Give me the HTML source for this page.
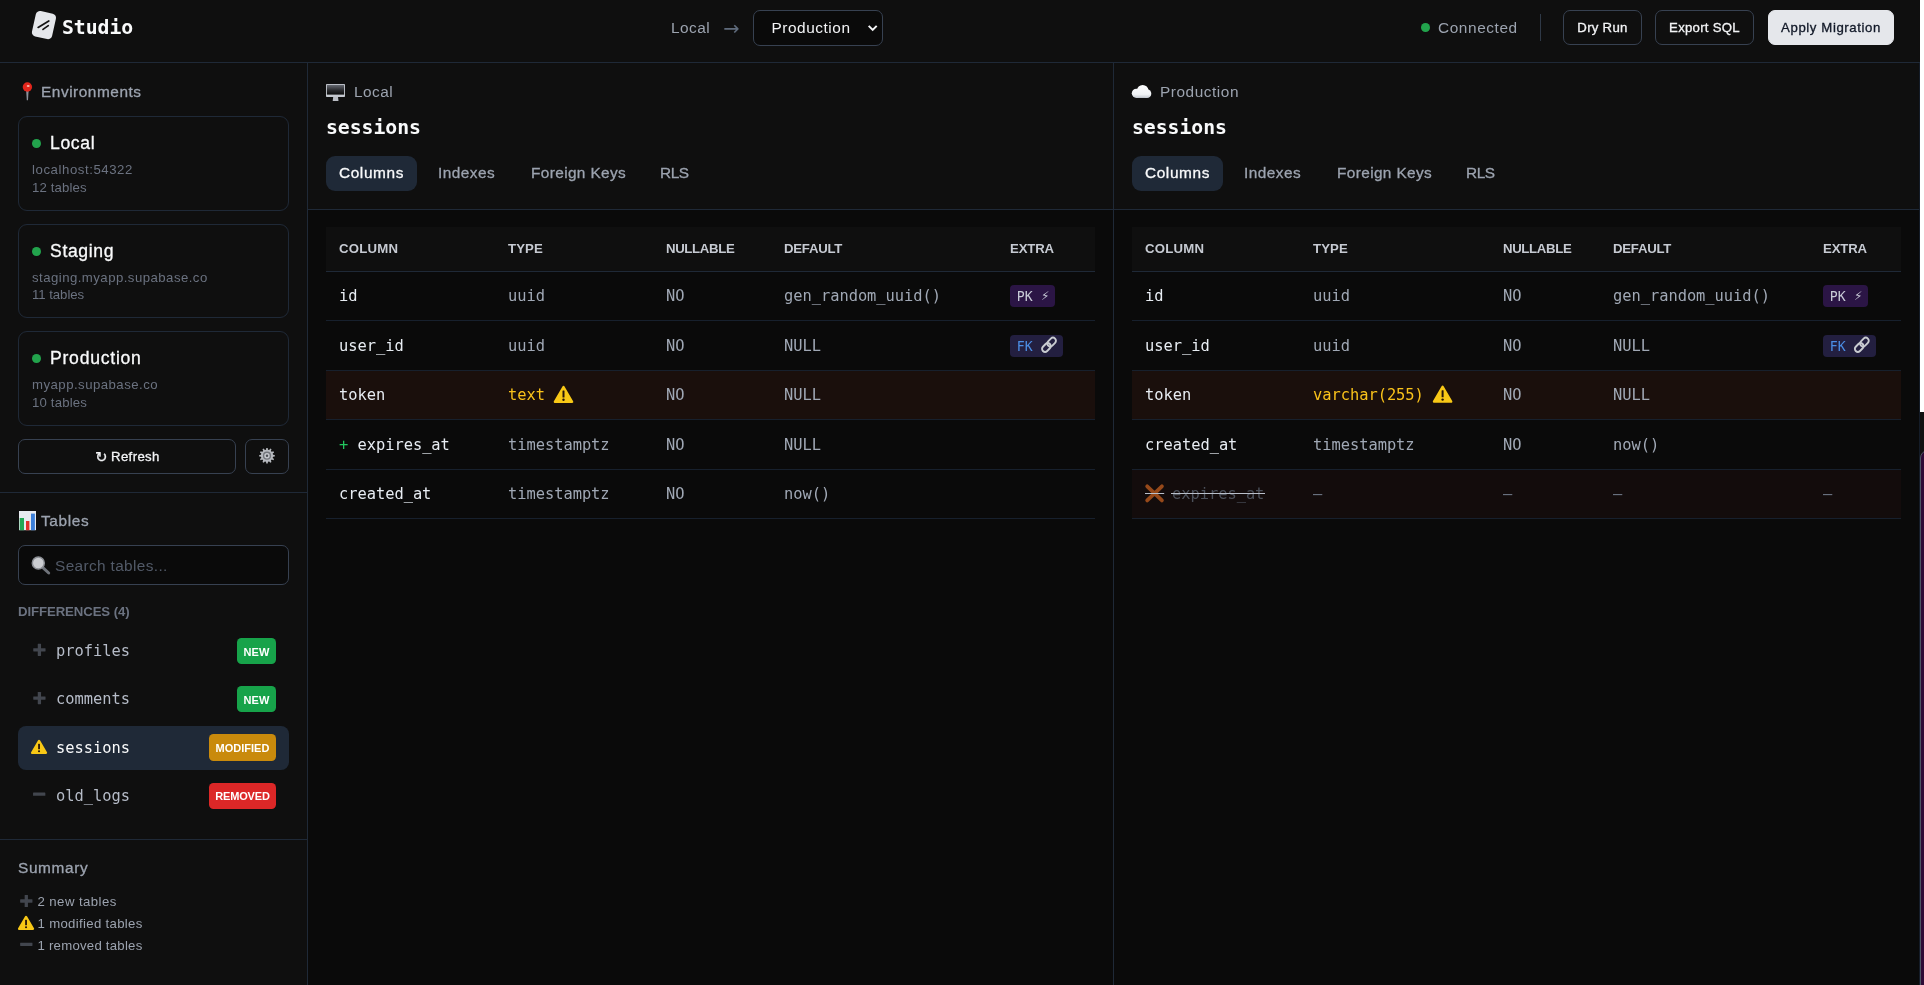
<!DOCTYPE html>
<html lang="en"><head>
<meta charset="utf-8">
<title>Studio</title>
<style>
*{box-sizing:border-box;margin:0;padding:0}
html,body{width:1924px;height:985px;overflow:hidden;background:#fff}
body{font-family:"Liberation Sans",sans-serif;color:#e5e7eb;position:relative;-webkit-font-smoothing:antialiased}
.mono{font-family:"DejaVu Sans Mono","Liberation Mono",monospace}
.sym{font-family:"DejaVu Sans",sans-serif}
#app{position:absolute;left:0;top:0;width:1920px;height:985px;background:#0a0a0a;overflow:hidden;will-change:transform}
.abs{position:absolute}
svg{display:block;position:absolute;overflow:visible}
.tx{white-space:nowrap}

/* right-edge sliver (off-canvas drawer peeking in) */
#edge1{position:absolute;left:1920px;top:412px;width:4px;height:573px;background:#111}
#edge2{position:absolute;left:1920px;top:450px;width:12px;height:540px;background:#2e0b36;border:1px solid #4b5563;border-radius:8px 0 0 0}

/* header */
#hdr{position:absolute;left:0;top:0;width:1920px;height:63px;background:#0f0f0f;border-bottom:1px solid #1f2937}
#hdr .title{position:absolute;left:62px;top:15px;font-size:19.8px;font-weight:600;line-height:26px;color:#f9fafb}
#hdr .src{position:absolute;left:671px;top:17px;font-size:15.4px;line-height:22px;color:#9ca3af}
#hdr .arrow{position:absolute;left:723.3px;top:17.5px;font-size:19.5px;line-height:22px;color:#5f6b7c}
#hdr .sel{position:absolute;left:753px;top:10px;width:130px;height:36px;border:1px solid #374151;border-radius:7px;background:#0a0a0a}
#hdr .sel .tx{position:absolute;left:17.5px;top:6px;color:#f3f4f6;font-size:15.4px;line-height:22px}
#hdr .conn{position:absolute;left:1438px;top:17px;font-size:15.4px;line-height:22px;color:#9ca3af}
.dot{position:absolute;width:8.8px;height:8.8px;border-radius:50%;background:#22a34c}
#hdr .vsep{position:absolute;left:1540px;top:14px;width:1px;height:27px;background:#2f3947}
.btn{position:absolute;top:10px;height:35px;border:1px solid #374151;border-radius:7px;background:#0f0f0f}
.btn .tx{position:absolute;left:0;right:0;top:8px;text-align:center;color:#f3f4f6;font-size:13.2px;font-weight:500;line-height:17px}
.btn.pri{background:#e5e7eb;border-color:#e5e7eb}
.btn.pri .tx{color:#111827}

/* sidebar */
#side{position:absolute;left:0;top:63px;width:308px;height:922px;background:#0f0f0f;border-right:1px solid #1f2937}
.sec-h{position:absolute;left:41px;font-size:15.4px;font-weight:500;color:#9ca3af;line-height:22px}
.card{position:absolute;left:18px;width:271px;height:95px;border:1px solid #1f2937;border-radius:9px}
.card .nm{position:absolute;left:31px;top:14px;font-size:17.6px;line-height:24px;color:#f9fafb;font-weight:500}
.card .dot{left:13px;top:22px}
.card .u{position:absolute;left:13px;top:44px;font-size:13.2px;line-height:18px;color:#6b7280}
.card .t{position:absolute;left:13px;top:62px;font-size:13.2px;line-height:18px;color:#6b7280}
.hline{position:absolute;left:0;width:307px;height:1px;background:#1f2937}
.sbtn{position:absolute;top:376px;height:35px;border:1px solid #374151;border-radius:7px}
.sbtn .tx{position:absolute;top:8px;font-size:13.2px;font-weight:500;color:#f3f4f6;line-height:17px}
.search{position:absolute;left:18px;top:482px;width:271px;height:40px;border:1px solid #374151;border-radius:7px;background:#0a0a0a}
.search .tx{position:absolute;left:36px;top:9px;color:#525a68;font-size:15.4px;line-height:22px}
.diffh{position:absolute;left:18px;top:540.7px;font-size:13.2px;font-weight:600;color:#6b7280;line-height:16px}
.item{position:absolute;left:18px;width:271px;height:44px;border-radius:8px}
.item.sel{background:#1f2937}
.item .n{position:absolute;left:38px;top:11px;font-size:15.4px;line-height:22px;color:#b6bcc8}
.item.sel .n{color:#f9fafb}
.badge{position:absolute;right:13px;top:9px;height:26px;border-radius:4.5px}
.badge .tx{position:absolute;left:0;right:0;top:6.6px;text-align:center;font-size:11px;font-weight:600;color:#fff;line-height:14px}
.b-new{background:#17a34a;width:39px}
.b-mod{background:#c98a0c;width:67px;top:8px;height:27px}
.b-mod .tx{top:7.1px}
.b-rem{background:#dc2727;width:67px}
.sum-h{position:absolute;left:18px;top:793.7px;font-size:15.4px;font-weight:500;color:#9ca3af;line-height:22px}
.sum{position:absolute;left:37.5px;font-size:13.2px;color:#9ca3af;line-height:18px}

.btn .tx,.sbtn .tx,.sec-h,.card .nm,.tab,.sum-h{-webkit-text-stroke:.3px currentColor}
/* panels */
.panel{position:absolute;top:63px;height:922px;background:#0a0a0a}
.panel .ph{position:absolute;left:0;top:0;width:100%;height:147px;background:#0f0f0f;border-bottom:1px solid #1f2937}
.panel .env{position:absolute;left:46px;top:18px;font-size:15.4px;line-height:22px;color:#9ca3af}
.panel .tn{position:absolute;left:18px;top:51px;font-size:19.8px;font-weight:600;line-height:28px;color:#f9fafb}
.tab{position:absolute;top:92.4px;height:35px;font-size:15.4px;font-weight:500;line-height:35px;color:#9ca3af}
.tabbg{position:absolute;left:18px;top:93px;width:91px;height:35px;background:#1f2937;border-radius:9px}
.tab.on{left:31px;color:#f9fafb}
table.t{position:absolute;left:18px;top:164px;width:769px;border-collapse:collapse;table-layout:fixed}
table.t th{height:44px;background:#0f0f0f;border-bottom:1px solid #1f2937;text-align:left;padding:0 0 1px 13px;font-size:13.2px;font-weight:600;color:#c6cad2}
table.t td{height:49.5px;border-bottom:1px solid #17202d;padding:1px 0 0 13px;font-size:15.4px;color:#a0a8b5;font-family:"DejaVu Sans Mono","Liberation Mono",monospace;position:relative}
table.t td:first-child{color:#e8edf3}
tr.mod td{background:#1a0f0c}
tr.rem td{background:#130c0c}
td.warn{color:#f9c21a !important}
.pill{display:inline-block;position:relative;height:22px;line-height:23.6px;border-radius:4px;font-size:13.2px;padding:0 6.8px;vertical-align:middle}
.pk{background:#2b1545;color:#c9ccd8}
.fk{background:#231f40;color:#4b8ee6}
.del{color:#4b505a;position:relative;display:inline-block}
.del::after{content:"";position:absolute;left:-1px;right:-1px;top:7.5px;height:1px;background:#b9bfca}
.dash{color:#6b7482 !important}
</style>
</head>
<body>
<div id="app">

<div id="hdr">
  <div class="title mono tx" style="letter-spacing: -0.04px;">Studio</div>
  <div class="src tx" style="letter-spacing: 0.49px;">Local</div>
  <div class="arrow sym">→</div>
  <div class="sel"><div class="tx" style="letter-spacing: 0.54px;">Production</div></div>
  <div class="dot" style="left:1421px;top:23px"></div>
  <div class="conn tx" style="letter-spacing: 0.59px;">Connected</div>
  <div class="vsep"></div>
  <div class="btn" style="left:1563px;width:79px"><div class="tx" style="letter-spacing: 0.28px;">Dry Run</div></div>
  <div class="btn" style="left:1655px;width:99px"><div class="tx" style="letter-spacing: 0.27px;">Export SQL</div></div>
  <div class="btn pri" style="left:1768px;width:126px"><div class="tx" style="letter-spacing: 0.6px;">Apply Migration</div></div>
  <svg style="left:0;top:0" width="900" height="62" viewBox="0 0 900 62">
    <g transform="rotate(12.6 43.95 25.1)"><rect x="33.65" y="12.1" width="20.6" height="26" rx="4.2" fill="#e5e7eb"></rect></g>
    <path d="M38.1 27.4L48.8 21M43 29.4L48.3 25.65" stroke="#141414" stroke-width="1.7" stroke-linecap="round" fill="none"></path>
    <path d="M868.7 25.9l4 4 4-4" stroke="#f3f4f6" stroke-width="2" fill="none"></path>
  </svg>
</div>

<div id="side">
  <div class="sec-h tx" style="top: 17.5px; letter-spacing: 0.54px;">Environments</div>
  <div class="card" style="top:53px"><div class="dot"></div><div class="nm tx" style="letter-spacing: 0.65px;">Local</div><div class="u tx" style="letter-spacing: 0.57px;">localhost:54322</div><div class="t tx" style="letter-spacing: 0.14px;">12 tables</div></div>
  <div class="card" style="top:161px;height:94px"><div class="dot"></div><div class="nm tx" style="letter-spacing: 0.65px;">Staging</div><div class="u tx" style="top: 43.5px; letter-spacing: 0.46px;">staging.myapp.supabase.co</div><div class="t tx" style="top: 61px; letter-spacing: -0.05px;">11 tables</div></div>
  <div class="card" style="top:268px"><div class="dot"></div><div class="nm tx" style="letter-spacing: 0.75px;">Production</div><div class="u tx" style="letter-spacing: 0.47px;">myapp.supabase.co</div><div class="t tx" style="letter-spacing: 0.18px;">10 tables</div></div>
  <div class="sbtn" style="left:18px;width:218px"><div class="tx sym" style="left:76.3px;top:8px;font-size:14.6px">↻</div><div class="tx" style="left: 92px; letter-spacing: 0.37px;">Refresh</div></div>
  <div class="sbtn" style="left:245px;width:44px"></div>
  <div class="hline" style="top:429px"></div>
  <div class="sec-h tx" style="top: 446.5px; letter-spacing: 0.65px;">Tables</div>
  <div class="search"><div class="tx" style="letter-spacing: 0.36px;">Search tables...</div></div>
  <div class="diffh tx" style="letter-spacing: -0.09px;">DIFFERENCES (4)</div>
  <div class="item" style="top:566px"><div class="n mono tx" style="letter-spacing: -0.03px;">profiles</div><div class="badge b-new"><div class="tx" style="letter-spacing: 0.19px;">NEW</div></div></div>
  <div class="item" style="top:614px"><div class="n mono tx" style="letter-spacing: -0.03px;">comments</div><div class="badge b-new"><div class="tx" style="letter-spacing: 0.19px;">NEW</div></div></div>
  <div class="item sel" style="top:663.1px"><div class="n mono tx" style="letter-spacing: -0.03px;">sessions</div><div class="badge b-mod"><div class="tx">MODIFIED</div></div></div>
  <div class="item" style="top:710.6px"><div class="n mono tx" style="letter-spacing: -0.03px;">old_logs</div><div class="badge b-rem"><div class="tx" style="letter-spacing: -0.14px;">REMOVED</div></div></div>
  <div class="hline" style="top:776px"></div>
  <div class="sum-h tx" style="letter-spacing: 0.64px;">Summary</div>
  <div class="sum tx" style="top: 829.8px; letter-spacing: 0.43px;">2 new tables</div>
  <div class="sum tx" style="top: 851.8px; letter-spacing: 0.32px;">1 modified tables</div>
  <div class="sum tx" style="top: 873.8px; letter-spacing: 0.24px;">1 removed tables</div>
  <svg style="left:0;top:0" width="307" height="922" viewBox="0 63 307 922">
    <defs>
      <g id="warnS"><path d="M0 -6.1L7 5.9H-7Z" fill="#f8c816" stroke="#f8c816" stroke-width="2.2" stroke-linejoin="round"></path><rect x="-0.9" y="-3.2" width="1.8" height="5.4" rx=".5" fill="#26150a"></rect><circle cx="0" cy="4.3" r="1.05" fill="#26150a"></circle></g>
      <g id="plusS" fill="#42464e"><rect x="-6.15" y="-1.65" width="12.3" height="3.3" rx=".4"></rect><rect x="-1.65" y="-6.1" width="3.3" height="12.2" rx=".4"></rect></g>
      <g id="minusS" fill="#42464e"><rect x="-6.15" y="-1.6" width="12.3" height="3.2" rx=".4"></rect></g>
    </defs>
    <!-- pin -->
    <path d="M26.2 91L28.6 91L28 100.2L26.8 100.2Z" fill="#8d929b"></path>
    <circle cx="27.4" cy="87" r="4.7" fill="#e3261c"></circle>
    <ellipse cx="28.2" cy="85.9" rx="1.5" ry="1" fill="#f6b5ab"></ellipse>
    <!-- gear -->
    <g transform="translate(259 447.7)">
      <path d="M14.02 7.05L15.77 7.27L15.77 8.73L14.02 8.95L13.69 10.19L15.09 11.25L14.36 12.52L12.74 11.84L11.84 12.74L12.52 14.36L11.25 15.09L10.19 13.69L8.95 14.02L8.73 15.77L7.27 15.77L7.05 14.02L5.81 13.69L4.75 15.09L3.48 14.36L4.16 12.74L3.26 11.84L1.64 12.52L0.91 11.25L2.31 10.19L1.98 8.95L0.23 8.73L0.23 7.27L1.98 7.05L2.31 5.81L0.91 4.75L1.64 3.48L3.26 4.16L4.16 3.26L3.48 1.64L4.75 0.91L5.81 2.31L7.05 1.98L7.27 0.23L8.73 0.23L8.95 1.98L10.19 2.31L11.25 0.91L12.52 1.64L11.84 3.26L12.74 4.16L14.36 3.48L15.09 4.75L13.69 5.81Z" fill="#b7babf"></path>
      <circle cx="8" cy="8" r="4.1" fill="#74777d"></circle><circle cx="8" cy="8" r="2.7" fill="#c6c9ce"></circle><circle cx="8" cy="8" r="1.2" fill="#4d5056"></circle>
    </g>
    <!-- chart -->
    <rect x="19" y="511" width="17" height="19.2" fill="#e7ebf1"></rect>
    <rect x="19.7" y="518" width="4.3" height="12.2" fill="#22a855"></rect>
    <rect x="26" y="521" width="3.4" height="9.2" fill="#e0322b"></rect>
    <rect x="31" y="513.6" width="3.9" height="16.6" fill="#3b7fd9"></rect>
    <!-- search -->
    <path d="M42.6 567.4L48.7 573" stroke="#6f737a" stroke-width="3" stroke-linecap="round"></path>
    <circle cx="38.3" cy="563" r="6" fill="#cbcdd1" stroke="#8b8e94" stroke-width="1.5"></circle>
    <!-- item icons -->
    <use href="#plusS" x="39.4" y="649.8"></use>
    <use href="#plusS" x="39.4" y="698.1"></use>
    <use href="#warnS" x="39.05" y="747"></use>
    <use href="#minusS" x="39.2" y="794.2"></use>
    <!-- summary icons -->
    <use href="#plusS" x="26.3" y="901"></use>
    <use href="#warnS" x="26.05" y="923"></use>
    <use href="#minusS" x="26.3" y="944.3"></use>
  </svg>
</div>

<div class="panel" style="left:308px;width:806px;border-right:1px solid #1f2937">
  <div class="ph">
    <div class="env tx" style="letter-spacing: 0.49px;">Local</div>
    <div class="tn mono tx" style="letter-spacing: -0.04px;">sessions</div>
    <div class="tabbg"></div>
    <div class="tab on tx" style="letter-spacing: 0.6px;">Columns</div>
    <div class="tab tx" style="left: 130px; letter-spacing: 0.48px;">Indexes</div>
    <div class="tab tx" style="left: 223px; letter-spacing: 0.37px;">Foreign Keys</div>
    <div class="tab tx" style="left: 352px; letter-spacing: -0.44px;">RLS</div>
  </div>
  <table class="t">
    <colgroup><col style="width:169px"><col style="width:158px"><col style="width:118px"><col style="width:226px"><col></colgroup>
    <tbody><tr><th class="tx" style="letter-spacing: 0.22px;">COLUMN</th><th class="tx" style="letter-spacing: 0.08px;">TYPE</th><th class="tx" style="letter-spacing: -0.34px;">NULLABLE</th><th class="tx" style="letter-spacing: -0.25px;">DEFAULT</th><th class="tx" style="letter-spacing: -0.17px;">EXTRA</th></tr>
    <tr><td class="tx" style="letter-spacing: -0.04px;">id</td><td class="tx" style="letter-spacing: -0.04px;">uuid</td><td class="tx" style="letter-spacing: -0.04px;">NO</td><td class="tx" style="letter-spacing: -0.03px;">gen_random_uuid()</td><td><span class="pill pk" style="width:45.3px"><span class="tx" style="letter-spacing: -0.03px;">PK</span><span class="sym abs" style="left:31px;top:0;font-size:12px">⚡︎</span></span></td></tr>
    <tr><td class="tx" style="letter-spacing: -0.03px;">user_id</td><td class="tx" style="letter-spacing: -0.04px;">uuid</td><td class="tx" style="letter-spacing: -0.04px;">NO</td><td class="tx" style="letter-spacing: -0.04px;">NULL</td><td><span class="pill fk" style="width:53.1px"><span class="tx" style="letter-spacing: -0.03px;">FK</span></span></td></tr>
    <tr class="mod"><td class="tx" style="letter-spacing: -0.03px;">token</td><td class="warn tx" style="letter-spacing: -0.04px;">text</td><td class="tx" style="letter-spacing: -0.04px;">NO</td><td class="tx" style="letter-spacing: -0.04px;">NULL</td><td></td></tr>
    <tr><td class="tx" style="letter-spacing: -0.03px;"><span style="color:#22c55e">+</span> expires_at</td><td class="tx" style="letter-spacing: -0.03px;">timestamptz</td><td class="tx" style="letter-spacing: -0.04px;">NO</td><td class="tx" style="letter-spacing: -0.04px;">NULL</td><td></td></tr>
    <tr><td class="tx" style="letter-spacing: -0.03px;">created_at</td><td class="tx" style="letter-spacing: -0.03px;">timestamptz</td><td class="tx" style="letter-spacing: -0.04px;">NO</td><td class="tx" style="letter-spacing: -0.03px;">now()</td><td></td></tr>
  </tbody></table>
  <svg style="left:0;top:0" width="806" height="922" viewBox="308 63 806 922">
    <defs>
      <linearGradient id="scr" x1="0" y1="0" x2="0" y2="1"><stop offset="0" stop-color="#666a72"></stop><stop offset=".55" stop-color="#2a2b2f"></stop><stop offset="1" stop-color="#0b0b0b"></stop></linearGradient>
      <g id="warnL"><path d="M0 -7.6L8.6 7.2H-8.6Z" fill="#f8c816" stroke="#f8c816" stroke-width="2.4" stroke-linejoin="round"></path><rect x="-1" y="-4.2" width="2" height="7" rx=".5" fill="#26150a"></rect><circle cx="0" cy="5.2" r="1.2" fill="#26150a"></circle></g>
      <g id="link" fill="none" stroke="#c9ccd1" stroke-width="1.9"><rect x="-4.9" y="-3" width="9.8" height="6" rx="3" transform="translate(-2.6 2.7) rotate(-45)"></rect><rect x="-4.9" y="-3" width="9.8" height="6" rx="3" transform="translate(2.6 -2.7) rotate(-45)"></rect></g>
    </defs>
    <!-- monitor -->
    <rect x="326" y="84" width="19" height="13" rx=".8" fill="#c4c8cf"></rect>
    <rect x="326.9" y="84.9" width="17.2" height="9.7" fill="url(#scr)"></rect>
    <path d="M333.2 97H338L338.5 100.9H332.7Z" fill="#b9bdc4"></path>
    <use href="#warnL" x="563.5" y="394.6"></use>
    <use href="#link" x="1049" y="344.8"></use>
  </svg>
</div>

<div class="panel" style="left:1114px;width:806px;border-right:1px solid #141c28">
  <div class="ph">
    <div class="env tx" style="letter-spacing: 0.54px;">Production</div>
    <div class="tn mono tx" style="letter-spacing: -0.04px;">sessions</div>
    <div class="tabbg"></div>
    <div class="tab on tx" style="letter-spacing: 0.6px;">Columns</div>
    <div class="tab tx" style="left: 130px; letter-spacing: 0.48px;">Indexes</div>
    <div class="tab tx" style="left: 223px; letter-spacing: 0.37px;">Foreign Keys</div>
    <div class="tab tx" style="left: 352px; letter-spacing: -0.44px;">RLS</div>
  </div>
  <table class="t">
    <colgroup><col style="width:168px"><col style="width:190px"><col style="width:110px"><col style="width:210px"><col></colgroup>
    <tbody><tr><th class="tx" style="letter-spacing: 0.22px;">COLUMN</th><th class="tx" style="letter-spacing: 0.08px;">TYPE</th><th class="tx" style="letter-spacing: -0.34px;">NULLABLE</th><th class="tx" style="letter-spacing: -0.25px;">DEFAULT</th><th class="tx" style="letter-spacing: -0.17px;">EXTRA</th></tr>
    <tr><td class="tx" style="letter-spacing: -0.04px;">id</td><td class="tx" style="letter-spacing: -0.04px;">uuid</td><td class="tx" style="letter-spacing: -0.04px;">NO</td><td class="tx" style="letter-spacing: -0.03px;">gen_random_uuid()</td><td><span class="pill pk" style="width:45.3px"><span class="tx" style="letter-spacing: -0.03px;">PK</span><span class="sym abs" style="left:31px;top:0;font-size:12px">⚡︎</span></span></td></tr>
    <tr><td class="tx" style="letter-spacing: -0.03px;">user_id</td><td class="tx" style="letter-spacing: -0.04px;">uuid</td><td class="tx" style="letter-spacing: -0.04px;">NO</td><td class="tx" style="letter-spacing: -0.04px;">NULL</td><td><span class="pill fk" style="width:53.1px"><span class="tx" style="letter-spacing: -0.03px;">FK</span></span></td></tr>
    <tr class="mod"><td class="tx" style="letter-spacing: -0.03px;">token</td><td class="warn tx" style="letter-spacing: -0.03px;">varchar(255)</td><td class="tx" style="letter-spacing: -0.04px;">NO</td><td class="tx" style="letter-spacing: -0.04px;">NULL</td><td></td></tr>
    <tr><td class="tx" style="letter-spacing: -0.03px;">created_at</td><td class="tx" style="letter-spacing: -0.03px;">timestamptz</td><td class="tx" style="letter-spacing: -0.04px;">NO</td><td class="tx" style="letter-spacing: -0.03px;">now()</td><td></td></tr>
    <tr class="rem"><td class="tx" style="padding-left: 40px; letter-spacing: -0.03px;"><span class="del">expires_at</span></td><td class="dash">—</td><td class="dash">—</td><td class="dash">—</td><td class="dash">—</td></tr>
  </tbody></table>
  <svg style="left:0;top:0" width="806" height="922" viewBox="1114 63 806 922">
    <defs><linearGradient id="cl" gradientUnits="userSpaceOnUse" x1="0" y1="85" x2="0" y2="98"><stop offset="0" stop-color="#fdfdfe"></stop><stop offset=".72" stop-color="#f0f2f5"></stop><stop offset="1" stop-color="#c3c8d0"></stop></linearGradient></defs>
    <!-- cloud -->
    <g fill="url(#cl)"><circle cx="1136.4" cy="93.35" r="4.6"></circle><circle cx="1142.7" cy="90.6" r="5.7"></circle><circle cx="1147" cy="93.65" r="4.3"></circle><rect x="1136.4" y="93" width="10.6" height="4.95"></rect></g>
    <use href="#warnL" x="1442.6" y="394.4"></use>
    <use href="#link" x="1861.8" y="344.8"></use>
    <!-- cross -->
    <path d="M1147.2 486.3L1161.9 500.4M1161.9 486.3L1147.2 500.4" stroke="#96491a" stroke-width="3.8" stroke-linecap="round"></path>
    <rect x="1145" y="493" width="19.2" height="1" fill="#b9bfca"></rect>
  </svg>
</div>

</div>
<div id="edge1"></div><div id="edge2"></div>


</body></html>
